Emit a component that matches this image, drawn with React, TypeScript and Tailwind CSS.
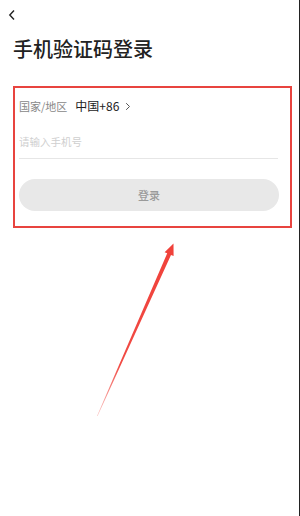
import React from 'react';

const App: React.FC = () => {
  return (
    <div
      className="relative w-[300px] h-[516px] bg-white border-r border-[#222] overflow-hidden"
      style={{ fontFamily: '"Noto Sans CJK SC", "Noto Sans", sans-serif' }}
    >
      {/* Back */}
      <div className="h-[30px] pl-[8px] flex items-center">
        <svg width="8" height="12" viewBox="0 0 8 12" fill="none">
          <path d="M6 1.5L1.8 6L6 10.5" stroke="#222" strokeWidth="1.4" />
        </svg>
      </div>

      <h1 className="mt-[5px] pl-[13px] text-[20px] leading-[28px] font-medium text-[#222]">手机验证码登录</h1>

      {/* Login form (highlighted) */}
      <div className="mt-[23px] mx-[13px] mr-[7px] h-[142px] border-2 border-[#e8443f] pl-[4px] pr-[11px]">
        <div className="mt-[8px] h-[20px] flex items-center">
          <span className="text-[11px] text-[#888]">国家/地区</span>
          <span className="ml-[8px] text-[12px] text-[#222]">中国+86</span>
          <svg className="ml-[6px]" width="6" height="9" viewBox="0 0 6 9" fill="none">
            <path d="M1.2 1.2L4.5 4.5L1.2 7.8" stroke="#555" strokeWidth="1" />
          </svg>
        </div>

        <div className="pt-[18px] pb-[8px] border-b border-[#e6e6e6] mr-[1px]">
          <div className="text-[10.5px] leading-[16px] text-[#cfcfcf]">请输入手机号</div>
        </div>

        <button className="mt-[20px] w-full h-[32px] rounded-full bg-[#e8e8e8] text-[11px] font-medium text-[#9a9a9a]">
          登录
        </button>
      </div>

      {/* Annotation arrow */}
      <svg className="absolute inset-0 pointer-events-none" width="300" height="516" viewBox="0 0 300 516">
        <defs>
          <linearGradient id="arr" x1="97" y1="416" x2="173" y2="244" gradientUnits="userSpaceOnUse">
            <stop offset="0" stopColor="#f0413a" stopOpacity="0.3" />
            <stop offset="0.3" stopColor="#f0413a" stopOpacity="0.95" />
            <stop offset="1" stopColor="#f0413a" />
          </linearGradient>
        </defs>
        <polygon
          points="97,416 167.2,253.3 164.6,252.2 173.5,243.5 173.6,256 171,254.9 97.6,416"
          fill="url(#arr)"
        />
      </svg>
    </div>
  );
};

export default App;
